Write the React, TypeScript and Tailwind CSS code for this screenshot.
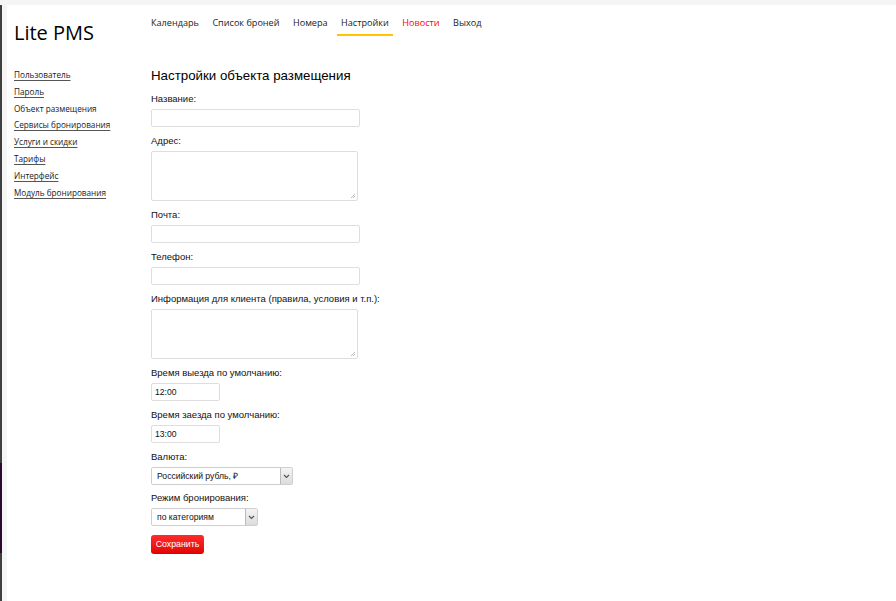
import React from "react";

const sans = { fontFamily: '"Liberation Sans", Arial, sans-serif' };
const open = { fontFamily: '"Open Sans", "Noto Sans", sans-serif' };

function Chevron() {
  return (
    <div className="flex h-full w-[12px] items-center justify-center border-l border-[#bbb] bg-gradient-to-b from-[#f4f4f4] to-[#dcdcdc]">
      <svg width="7" height="5" viewBox="0 0 7 5">
        <path d="M1 1 L3.5 3.5 L6 1" stroke="#555" strokeWidth="1.2" fill="none" />
      </svg>
    </div>
  );
}

function Label({ children }: { children: React.ReactNode }) {
  return <div className="h-[14px] whitespace-nowrap text-[9.5px] leading-[14px] text-[#111]">{children}</div>;
}

function Grip() {
  return (
    <svg className="absolute bottom-[1px] right-[1px]" width="6" height="6" viewBox="0 0 6 6">
      <path d="M5 1 L1 5 M5 3 L3 5" stroke="#aaa" strokeWidth="0.8" />
    </svg>
  );
}

export default function App() {
  const side = [
    { t: "Пользователь", l: true },
    { t: "Пароль", l: true },
    { t: "Объект размещения", l: false },
    { t: "Сервисы бронирования", l: true },
    { t: "Услуги и скидки", l: true },
    { t: "Тарифы", l: true },
    { t: "Интерфейс", l: true },
    { t: "Модуль бронирования", l: true },
  ];
  const nav = ["Календарь", "Список броней", "Номера", "Настройки", "Новости", "Выход"];
  return (
    <div className="flex h-[601px] w-[896px] flex-col overflow-hidden bg-[#f5f5f5]" style={sans}>
      <div className="h-[5px] shrink-0" />
      <div className="flex flex-1">
        <div className="flex w-[2px] flex-col bg-[#3f3f3f]">
          <div className="h-[458px]" />
          <div className="h-[90px] bg-[#2a0a2a]" />
        </div>
        <div className="w-[5px]" />
        <div className="flex flex-1 bg-white">
          {/* sidebar */}
          <div className="w-[144px] shrink-0 pl-[7px]">
            <div className="pt-[14px] text-[20px] leading-[28px] text-black" style={open}>
              Lite PMS
            </div>
            <div className="mt-[20px] flex flex-col" style={open}>
              {side.map((s) => (
                <div key={s.t} className="h-[16.8px] whitespace-nowrap text-[8.2px] leading-[16px] text-[#1a1a1a]">
                  <span className={s.l ? "underline decoration-[#555] underline-offset-2" : ""}>{s.t}</span>
                </div>
              ))}
            </div>
          </div>
          {/* main */}
          <div className="flex-1">
            <div className="flex h-[32px] items-start pt-[11px]" style={open}>
              {nav.map((n) => (
                <div
                  key={n}
                  className={
                    "mr-[13.5px] flex h-[21px] flex-col whitespace-nowrap text-[9.1px] leading-[14px] " +
                    (n === "Новости" ? "text-[#ff0000]" : "text-[#1a1a1a]")
                  }
                >
                  <span>{n}</span>
                  {n === "Настройки" ? <div className="mx-[-4px] mt-[4px] h-[2px] bg-[#ffc600]" /> : null}
                </div>
              ))}
            </div>
            <div className="mt-[30px] whitespace-nowrap text-[13.3px] leading-[18px] text-black">Настройки объекта размещения</div>
            <div className="mt-[7px] flex flex-col items-start">
              <Label>Название:</Label>
              <div className="mt-[3px] h-[18px] w-[209px] rounded-[2px] border border-[#dedede] bg-white" />
              <div className="mt-[7px]" />
              <Label>Адрес:</Label>
              <div className="relative mt-[3px] h-[50px] w-[207px] rounded-[2px] border border-[#dedede] bg-white">
                <Grip />
              </div>
              <div className="mt-[7px]" />
              <Label>Почта:</Label>
              <div className="mt-[3px] h-[18px] w-[209px] rounded-[2px] border border-[#dedede] bg-white" />
              <div className="mt-[7px]" />
              <Label>Телефон:</Label>
              <div className="mt-[3px] h-[18px] w-[209px] rounded-[2px] border border-[#dedede] bg-white" />
              <div className="mt-[7px]" />
              <Label>Информация для клиента (правила, условия и т.п.):</Label>
              <div className="relative mt-[3px] h-[50px] w-[207px] rounded-[2px] border border-[#dedede] bg-white">
                <Grip />
              </div>
              <div className="mt-[7px]" />
              <Label>Время выезда по умолчанию:</Label>
              <div className="mt-[3px] flex h-[18px] w-[69px] items-center rounded-[2px] border border-[#dedede] bg-white pl-[3px] text-[8.6px] text-[#111]">
                12:00
              </div>
              <div className="mt-[7px]" />
              <Label>Время заезда по умолчанию:</Label>
              <div className="mt-[3px] flex h-[18px] w-[69px] items-center rounded-[2px] border border-[#dedede] bg-white pl-[3px] text-[8.6px] text-[#111]">
                13:00
              </div>
              <div className="mt-[7px]" />
              <Label>Валюта:</Label>
              <div className="mt-[3px] flex h-[18px] w-[142px] items-center rounded-[2px] border border-[#cfcfcf] bg-white text-[8.6px] text-[#111]">
                <div className="flex-1 whitespace-nowrap pl-[5px]">Российский рубль, ₽</div>
                <Chevron />
              </div>
              <div className="mt-[6px]" />
              <Label>Режим бронирования:</Label>
              <div className="mt-[3px] flex h-[18px] w-[107px] items-center rounded-[2px] border border-[#cfcfcf] bg-white text-[8.6px] text-[#111]">
                <div className="flex-1 whitespace-nowrap pl-[5px]">по категориям</div>
                <Chevron />
              </div>
              <div className="mt-[9px] flex h-[19px] w-[53px] items-center justify-center rounded-[3px] bg-gradient-to-b from-[#ff2a2a] to-[#e00000] text-[8.8px] text-white">
                Сохранить
              </div>
            </div>
          </div>
        </div>
      </div>
    </div>
  );
}
